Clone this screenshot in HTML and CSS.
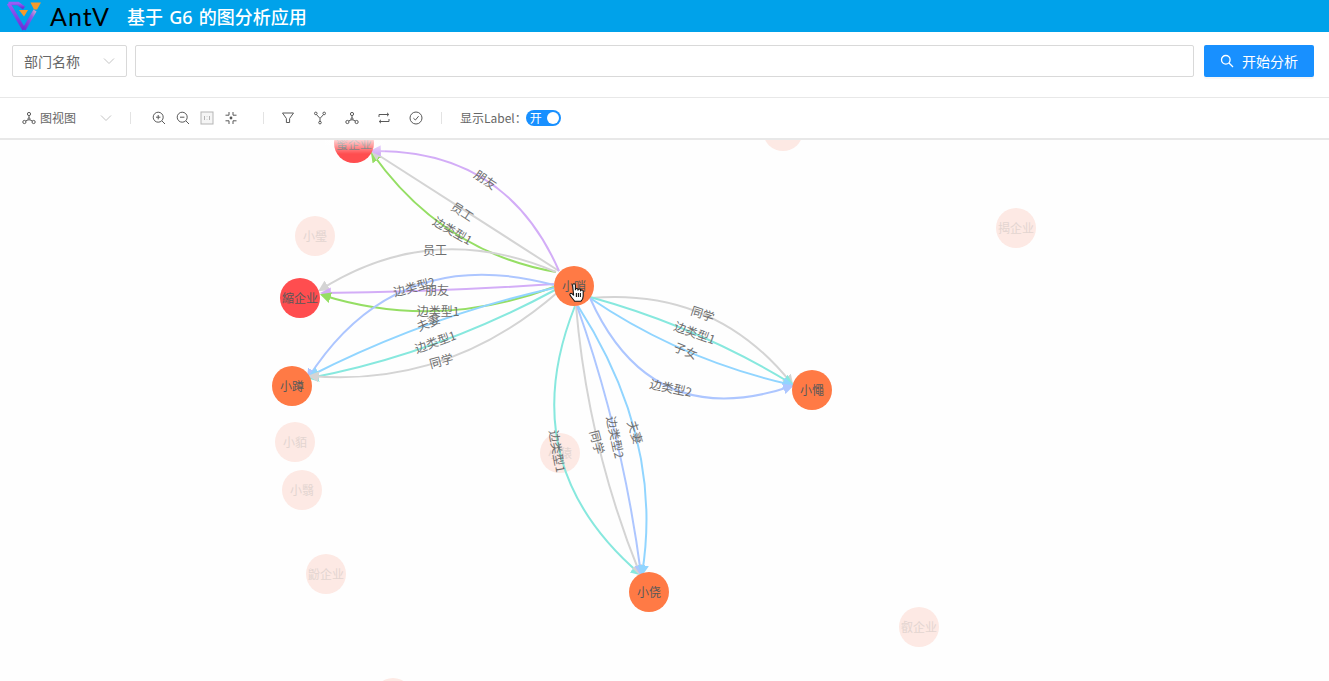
FILE: index.html
```html
<!DOCTYPE html>
<html lang="zh">
<head>
  <meta charset="UTF-8" />
  <meta name="viewport" content="width=device-width, initial-scale=1.0">
  <title>基于 G6 的图分析应用</title>
  <link rel="stylesheet" href="styles.css">
</head>
<body>
  <svg class="defs" width="0" height="0">
    <defs>
      <symbol id="icon-network" viewBox="0 0 14 14">
        <circle cx="7" cy="3" r="1.6"/><circle cx="2.4" cy="11" r="1.6"/><circle cx="11.6" cy="11" r="1.6"/><circle cx="7" cy="8" r="1.1" class="dot"/>
        <path d="M7 4.6V7M6.2 8.8L3.6 10M7.8 8.8L10.4 10"/>
      </symbol>
      <linearGradient id="logo-left" x1="0" y1="0" x2="0" y2="1">
        <stop offset="0" stop-color="#9a5cf5"/><stop offset="1" stop-color="#6a2fd8"/>
      </linearGradient>
      <linearGradient id="logo-right" x1="0" y1="1" x2="1" y2="0">
        <stop offset="0" stop-color="#6a2fd8"/><stop offset="0.7" stop-color="#8f5be8"/><stop offset="1" stop-color="#c9a0d0"/>
      </linearGradient>
      <linearGradient id="top-fade" x1="0" y1="0" x2="0" y2="1">
        <stop offset="0" stop-color="#fff" stop-opacity="0.75"/><stop offset="1" stop-color="#fff" stop-opacity="0"/>
      </linearGradient>
      <marker id="arrow-purple" class="arrow" viewBox="0 0 10 10" refX="8" refY="5" markerWidth="11" markerHeight="11" markerUnits="userSpaceOnUse" orient="auto"><path d="M0 0L10 5L0 10z" fill="#d3adf7"/></marker>
      <marker id="arrow-gray" viewBox="0 0 10 10" refX="8" refY="5" markerWidth="11" markerHeight="11" markerUnits="userSpaceOnUse" orient="auto"><path d="M0 0L10 5L0 10z" fill="#d4d4d4"/></marker>
      <marker id="arrow-green" viewBox="0 0 10 10" refX="8" refY="5" markerWidth="11" markerHeight="11" markerUnits="userSpaceOnUse" orient="auto"><path d="M0 0L10 5L0 10z" fill="#95de64"/></marker>
      <marker id="arrow-lavender" viewBox="0 0 10 10" refX="8" refY="5" markerWidth="11" markerHeight="11" markerUnits="userSpaceOnUse" orient="auto"><path d="M0 0L10 5L0 10z" fill="#adc6ff"/></marker>
      <marker id="arrow-sky" viewBox="0 0 10 10" refX="8" refY="5" markerWidth="11" markerHeight="11" markerUnits="userSpaceOnUse" orient="auto"><path d="M0 0L10 5L0 10z" fill="#91d5ff"/></marker>
      <marker id="arrow-cyan" viewBox="0 0 10 10" refX="8" refY="5" markerWidth="11" markerHeight="11" markerUnits="userSpaceOnUse" orient="auto"><path d="M0 0L10 5L0 10z" fill="#87e8de"/></marker>
    </defs>
  </svg>

  <header class="topbar">
    <svg class="logo" viewBox="0 0 36 32" width="36" height="32">
      <path d="M2.5 3.5H12L18 8" class="logo-stroke" stroke="url(#logo-left)"/>
      <path d="M2.5 3.5L18 29.5" class="logo-stroke" stroke="url(#logo-left)"/>
      <path d="M18 29.5L29 10.5" class="logo-stroke" stroke="url(#logo-right)"/>
      <path d="M24.5 2.5H35L31 9.5H28z" fill="#f79a2a"/>
      <path d="M13 10H22L18 16.5z" fill="#f79a2a"/>
    </svg>
    <span class="brand">AntV</span>
    <span class="app-title">基于 G6 的图分析应用</span>
  </header>

  <section class="search-row">
    <div class="dept-select">
      <span>部门名称</span>
      <svg class="chevron" viewBox="0 0 12 12" width="12" height="12"><path d="M1 3.5L6 8.5L11 3.5"/></svg>
    </div>
    <div class="search-input"></div>
    <button class="analyze-btn">
      <svg viewBox="0 0 14 14" width="14" height="14"><circle cx="5.8" cy="5.8" r="4.3"/><path d="M9 9L13 13"/></svg>
      <span>开始分析</span>
    </button>
  </section>

  <nav class="toolbar">
    <div class="view-select">
      <svg class="tool-icon" width="14" height="14"><use href="#icon-network"/></svg>
      <span>图视图</span>
      <svg class="chevron" viewBox="0 0 12 12" width="12" height="12"><path d="M1 3.5L6 8.5L11 3.5"/></svg>
    </div>
    <i class="divider"></i>
    <div class="tool-group zoom-tools">
      <svg class="tool-icon" viewBox="0 0 14 14" width="14" height="14"><circle cx="6.2" cy="6.2" r="5"/><path d="M10 10L13 13M4 6.2H8.4M6.2 4V8.4"/></svg>
      <svg class="tool-icon" viewBox="0 0 14 14" width="14" height="14"><circle cx="6.2" cy="6.2" r="5"/><path d="M10 10L13 13M4 6.2H8.4"/></svg>
      <svg class="tool-icon faint" viewBox="0 0 14 14" width="14" height="14"><rect x="1" y="1" width="12" height="12"/><path d="M4.5 5V9M9.5 5V9M7 5.5V6M7 8V8.5"/></svg>
      <svg class="tool-icon" viewBox="0 0 14 14" width="14" height="14"><circle cx="7" cy="7" r="1.4" class="dot"/><path d="M5 1V4.2H1.5M9 1V4.2H12.5M5 13V9.8H1.5M9 13V9.8H12.5"/></svg>
    </div>
    <i class="divider"></i>
    <div class="tool-group graph-tools">
      <svg class="tool-icon" viewBox="0 0 14 14" width="14" height="14"><path d="M1.5 2H12.5L8.6 7.5V11.5H5.4V7.5z"/></svg>
      <svg class="tool-icon" viewBox="0 0 14 14" width="14" height="14"><circle cx="2.8" cy="2.4" r="1.3"/><circle cx="11.2" cy="2.4" r="1.3"/><circle cx="7" cy="11.6" r="1.3"/><path d="M3.5 3.6L7 7.4L10.5 3.6M7 7.4V10.3"/></svg>
      <svg class="tool-icon" width="14" height="14"><use href="#icon-network"/></svg>
      <svg class="tool-icon" viewBox="0 0 14 14" width="14" height="14"><path d="M2 6V3.5H11.5M10 1.8L11.8 3.5L10 5.2M12 8V10.5H2.5M4 8.8L2.2 10.5L4 12.2"/></svg>
      <svg class="tool-icon" viewBox="0 0 14 14" width="14" height="14"><circle cx="7" cy="7" r="6"/><path d="M4.4 7.2L6.4 9L9.6 5.2"/></svg>
    </div>
    <i class="divider"></i>
    <span class="label-text">显示Label：</span>
    <div class="switch"><span>开</span><i class="knob"></i></div>
  </nav>

  <main class="canvas">
    <svg class="graph" viewBox="0 140 1329 541" width="1329" height="541">
      <!-- faded nodes -->
      <g class="node faded">
        <circle cx="783" cy="131" r="20"/>
        <circle cx="315" cy="236" r="20"/><text x="315" y="236">小璺</text>
        <circle cx="1016" cy="228" r="20"/><text x="1016" y="228">揭企业</text>
        <circle cx="295" cy="442" r="20"/><text x="295" y="442">小貊</text>
        <circle cx="302" cy="490" r="20"/><text x="302" y="490">小翳</text>
        <circle cx="560" cy="453" r="20"/><text x="560" y="453">小猿</text>
        <circle cx="326" cy="574" r="20"/><text x="326" y="574">鼢企业</text>
        <circle cx="919" cy="627" r="20"/><text x="919" y="627">叡企业</text>
        <circle cx="393" cy="698" r="20"/>
      </g>

      <!-- edges -->
      <g class="edges">
        <path class="green" d="M556 272Q442 252 372 153" marker-end="url(#arrow-green)"/>
        <path class="gray" d="M559 271L372 151" marker-end="url(#arrow-gray)"/>
        <path class="purple" d="M559 271Q506 149 372 151" marker-end="url(#arrow-purple)"/>

        <path class="gray" d="M556 272Q432 219 320 290" marker-end="url(#arrow-gray)"/>
        <path class="purple" d="M554 284Q437 292 322 293" marker-end="url(#arrow-purple)"/>
        <path class="green" d="M554 287Q436 331 322 295" marker-end="url(#arrow-green)"/>

        <path class="lavender" d="M554 285Q395 242 308 378" marker-end="url(#arrow-lavender)"/>
        <path class="sky" d="M554 288Q428 316 310 376" marker-end="url(#arrow-sky)"/>
        <path class="cyan" d="M555 290Q436 354 310 378" marker-end="url(#arrow-cyan)"/>
        <path class="gray" d="M558 292Q448 388 310 376" marker-end="url(#arrow-gray)"/>

        <path class="gray" d="M590 298Q715 287 792 384" marker-end="url(#arrow-gray)"/>
        <path class="cyan" d="M590 297Q699 327 792 384" marker-end="url(#arrow-cyan)"/>
        <path class="sky" d="M590 298Q681 360 792 385" marker-end="url(#arrow-sky)"/>
        <path class="lavender" d="M590 298Q651 434 792 386" marker-end="url(#arrow-lavender)"/>

        <path class="cyan" d="M575 306Q512 464 640 574" marker-end="url(#arrow-cyan)"/>
        <path class="gray" d="M576 306Q588 446 640 574" marker-end="url(#arrow-gray)"/>
        <path class="lavender" d="M577 306Q623 436 641 574" marker-end="url(#arrow-lavender)"/>
        <path class="sky" d="M578 306Q664 440 642 574" marker-end="url(#arrow-sky)"/>
      </g>

      <!-- main nodes -->
      <g class="node hot">
        <circle class="red" cx="354" cy="143" r="20"/><text x="354" y="144">蜜企业</text>
        <circle class="red" cx="300" cy="298" r="20"/><text x="300" y="298">縮企业</text>
        <circle class="orange" cx="574" cy="286" r="20"/><text x="574" y="286">小哨</text>
        <circle class="orange" cx="292" cy="386" r="20"/><text x="292" y="386">小蹲</text>
        <circle class="orange" cx="812" cy="390" r="20"/><text x="812" y="390">小憴</text>
        <circle class="orange" cx="649" cy="592" r="20"/><text x="649" y="592">小侥</text>
      </g>
      <rect x="325" y="140" width="60" height="14" fill="url(#top-fade)"/>

      <!-- edge labels -->
      <g class="edge-labels">
        <text transform="translate(486 180) rotate(34)">朋友</text>
        <text transform="translate(463 212) rotate(33)">员工</text>
        <text transform="translate(453 231) rotate(30)">边类型1</text>
        <text transform="translate(435 250)">员工</text>
        <text transform="translate(414 287) rotate(-15)">边类型2</text>
        <text transform="translate(437 290)">朋友</text>
        <text transform="translate(438 311)">边类型1</text>
        <text transform="translate(428 323) rotate(-22)">夫妻</text>
        <text transform="translate(435 342) rotate(-20)">边类型1</text>
        <text transform="translate(441 361) rotate(-15)">同学</text>
        <text transform="translate(703 314) rotate(18)">同学</text>
        <text transform="translate(695 333) rotate(20)">边类型1</text>
        <text transform="translate(686 351) rotate(22)">子女</text>
        <text transform="translate(671 388) rotate(12)">边类型2</text>
        <text transform="translate(558 452) rotate(80)">边类型1</text>
        <text transform="translate(598 443) rotate(75)">同学</text>
        <text transform="translate(616 438) rotate(78)">边类型2</text>
        <text transform="translate(636 433) rotate(72)">夫妻</text>
      </g>

      <!-- pointer over the hovered node -->
      <g class="hand">
        <path d="M572.6 285.2a1.4 1.4 0 0 1 2.8 0v4.6a1.3 1.3 0 0 1 2.6 0v.4a1.3 1.3 0 0 1 2.6.3v.5a1.3 1.3 0 0 1 2.6.5v4.5c0 2.4-1 4-2.2 5.2h-6.4c-1.4-2-3.4-3.8-4.6-6.2c-.6-1.5 1-2.3 2.2-1.2l1.4 1.4z"/>
        <path d="M576.4 293v4M578.4 293v4M580.4 293v4"/>
      </g>
    </svg>
  </main>
</body>
</html>
```

FILE: styles.css
```css
* { box-sizing: border-box; }
html, body {
  height: 100%;
}
body {
  margin: 0;
  font-family: "Noto Sans CJK SC", "Noto Sans", sans-serif;
  background: #fefefe;
  color: #666;
  overflow: hidden;
  display: flex;
  flex-direction: column;
}
.defs {
  position: absolute;
}

/* header */
.topbar {
  height: 32px;
  background: #00a2ea;
  display: flex;
  align-items: center;
  padding-left: 6px;
  flex-shrink: 0;
}
.logo {
  margin-right: 8px;
}
.logo-stroke {
  fill: none;
  stroke-width: 3.5;
}
.brand {
  font-family: Lato, sans-serif;
  font-size: 25px;
  letter-spacing: 1px;
  color: #000;
  width: 77px;
}
.app-title {
  font-family: "Noto Sans", "Noto Sans CJK SC", sans-serif;
  font-size: 18px;
  font-weight: 500;
  word-spacing: 1.5px;
  color: #fff;
}

/* search row */
.search-row {
  height: 66px;
  flex-shrink: 0;
  display: flex;
  align-items: center;
  padding: 0 15px 8px 12px;
  border-bottom: 1px solid #e8e8e8;
  background: #fff;
}
.dept-select {
  width: 115px;
  height: 32px;
  border: 1px solid #d9d9d9;
  border-radius: 2px;
  display: flex;
  align-items: center;
  justify-content: space-between;
  padding: 0 11px;
  font-size: 14px;
  line-height: 1;
}
.chevron {
  fill: none;
  stroke: #c4c4c4;
  stroke-width: 1;
}
.search-input {
  flex: 1;
  height: 32px;
  margin: 0 10px 0 8px;
  border: 1px solid #d9d9d9;
  border-radius: 2px;
}
.analyze-btn {
  width: 110px;
  height: 32px;
  border: none;
  border-radius: 2px;
  background: #1890ff;
  color: #fff;
  font: inherit;
  font-size: 14px;
  line-height: 1;
  display: flex;
  align-items: center;
  justify-content: center;
  gap: 8px;
  box-shadow: 0 2px 0 rgba(0,0,0,0.03);
}
.analyze-btn svg {
  fill: none;
  stroke: #fff;
  stroke-width: 1.3;
}

/* toolbar */
.toolbar {
  height: 42px;
  flex-shrink: 0;
  display: flex;
  align-items: center;
  padding: 0 0 0 22px;
  border-bottom: 2px solid #e8e8e8;
  background: #fff;
  font-size: 12px;
  line-height: 1;
}
.tool-icon {
  fill: none;
  stroke: #595959;
  stroke-width: 1;
  flex-shrink: 0;
}
.tool-icon .dot {
  fill: #595959;
  stroke: none;
}
.tool-icon.faint {
  stroke: #b5b5b5;
  fill: #f5f5f5;
}
.view-select {
  width: 90px;
  display: flex;
  align-items: center;
  gap: 4px;
}
.view-select .chevron {
  margin-left: auto;
}
.divider {
  width: 1px;
  height: 12px;
  background: #e3e3e3;
  margin: 0 21px 0 18px;
}
.tool-group {
  display: flex;
  align-items: center;
}
.zoom-tools {
  gap: 10px;
  margin-right: 7px;
}
.graph-tools {
  gap: 18px;
  margin-left: -4px;
}
.label-text {
  color: #666;
  margin-right: -1px;
  margin-left: -3px;
}
.switch {
  width: 35px;
  height: 16px;
  border-radius: 8px;
  background: #1890ff;
  color: #fff;
  display: flex;
  align-items: center;
  justify-content: space-between;
  padding: 0 2px 0 4px;
}
.knob {
  width: 12px;
  height: 12px;
  border-radius: 50%;
  background: #fff;
}

/* graph */
.canvas {
  flex: 1;
  overflow: hidden;
  min-height: 0;
}
.graph {
  display: block;
}
.node text {
  font-size: 12px;
  text-anchor: middle;
  dominant-baseline: central;
  transform: translateY(-1px);
}
.node.faded circle {
  fill: #fde9e4;
}
.node.faded text {
  fill: #e3d5d1;
}
.node.hot text {
  fill: #595959;
}
.red {
  fill: #ff4d4f;
}
.orange {
  fill: #ff7a45;
}
.edges path {
  fill: none;
  stroke-width: 2;
}
.purple { stroke: #d3adf7; }
.gray { stroke: #d4d4d4; }
.green { stroke: #95de64; }
.lavender { stroke: #adc6ff; }
.sky { stroke: #91d5ff; }
.cyan { stroke: #87e8de; }
.edge-labels {
  transform: translateY(-1px);
}
.edge-labels text {
  font-size: 12px;
  fill: #6e6e6e;
  text-anchor: middle;
  dominant-baseline: central;
}
.hand path {
  fill: #fff;
  stroke: #111;
  stroke-width: 1.1;
  stroke-linejoin: round;
}
```
